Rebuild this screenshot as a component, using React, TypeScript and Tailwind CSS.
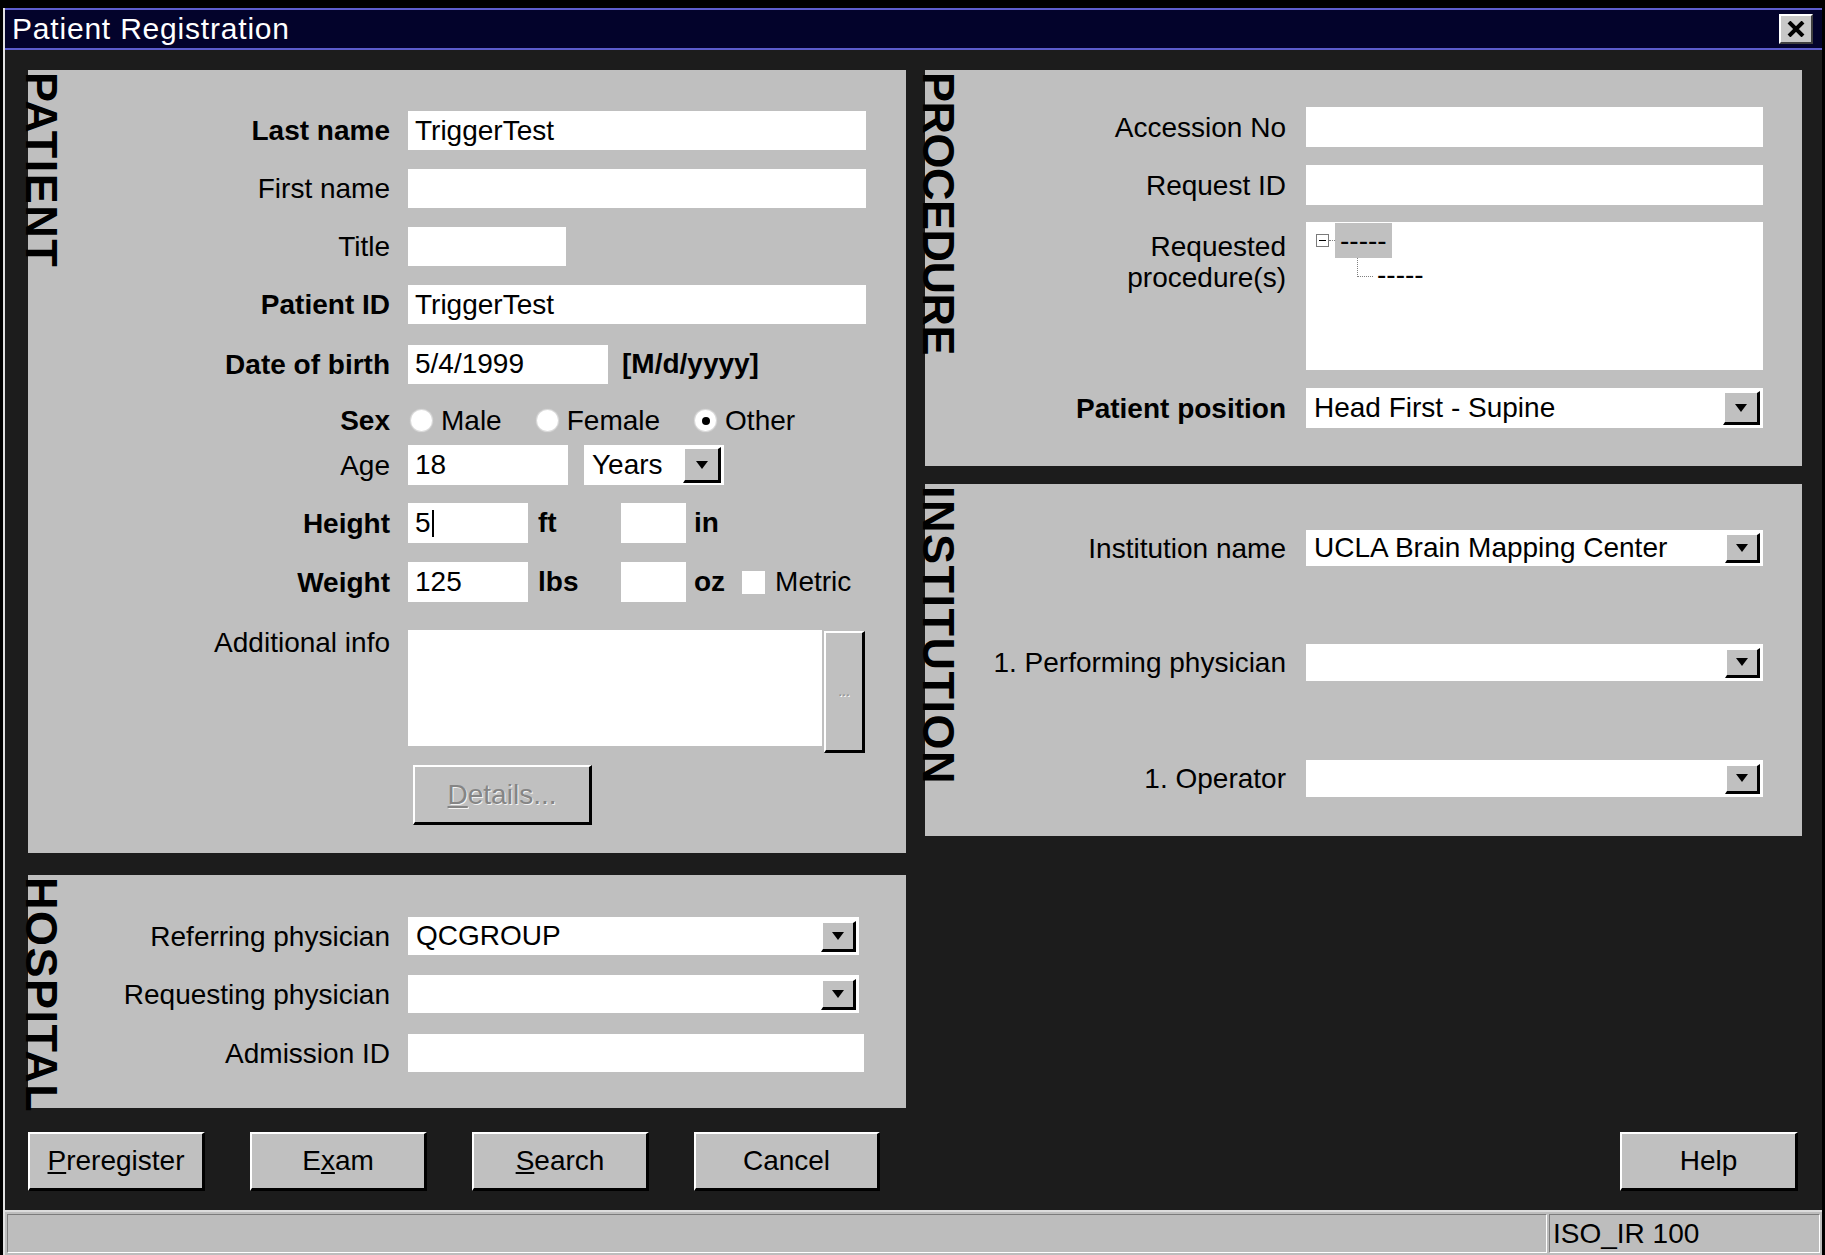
import React from 'react';

const raised =
  'border-t-2 border-l-2 border-r-[3px] border-b-[3px] border-t-white border-l-white border-r-black border-b-black';

const VTitle: React.FC<{ text: string; tight?: boolean }> = ({ text, tight }) => (
  <div className="w-[34px] shrink-0">
    <div
      className={`-ml-[9px] mt-[2px] [writing-mode:vertical-rl] text-[45px] font-bold leading-none text-black whitespace-nowrap ${
        tight ? 'tracking-[-0.5px]' : 'tracking-[1.5px]'
      }`}
    >
      {text}
    </div>
  </div>
);

const Panel: React.FC<{ title: string; tight?: boolean; className: string; children: React.ReactNode }> = ({
  title,
  tight,
  className,
  children,
}) => (
  <div className={`flex bg-[#bfbfbf] ${className}`}>
    <VTitle text={title} tight={tight} />
    <div className="flex-1 flex flex-col">{children}</div>
  </div>
);

const Row: React.FC<{
  label: React.ReactNode;
  bold?: boolean;
  wide?: boolean;
  className?: string;
  start?: boolean;
  children?: React.ReactNode;
}> = ({ label, bold, wide, className = '', start, children }) => (
  <div className={`flex ${start ? 'items-start' : 'items-center'} ${className}`}>
    <div className={`shrink-0 text-right leading-[31px] ${wide ? 'w-[327px]' : 'w-[328px]'} ${bold ? 'font-bold' : ''}`}>
      {label}
    </div>
    <div className={`flex items-center ${wide ? 'ml-[20px]' : 'ml-[18px]'}`}>{children}</div>
  </div>
);

const Box: React.FC<{ className: string; children?: React.ReactNode }> = ({ className, children }) => (
  <div className={`bg-white flex items-center pl-[7px] whitespace-nowrap ${className}`}>{children}</div>
);

const DropBtn: React.FC<{ className: string }> = ({ className }) => (
  <div className={`bg-[#c0c0c0] flex items-center justify-center shrink-0 ${raised} ${className}`}>
    <svg width="12" height="8" viewBox="0 0 12 8">
      <polygon points="0,0 12,0 6,8" fill="#000" />
    </svg>
  </div>
);

const Select: React.FC<{ className: string; value?: string; btn?: string }> = ({ className, value, btn = 'w-[35px] h-[31px]' }) => (
  <div className={`bg-white flex items-center justify-between pl-[8px] pr-[3px] ${className}`}>
    <span className="whitespace-nowrap">{value}</span>
    <DropBtn className={btn} />
  </div>
);

const Radio: React.FC<{ label: string; checked?: boolean }> = ({ label, checked }) => (
  <div className="flex items-center">
    <div className="w-[21px] h-[21px] rounded-full bg-white shadow-[0_0_1px_1px_#dedede] flex items-center justify-center">
      {checked && <div className="w-[8px] h-[8px] rounded-full bg-black" />}
    </div>
    <span className="ml-[9px]">{label}</span>
  </div>
);

const Button: React.FC<{ className: string; children: React.ReactNode }> = ({ className, children }) => (
  <div className={`bg-[#c0c0c0] flex items-center justify-center ${raised} ${className}`}>{children}</div>
);

export default function App() {
  return (
    <div className="w-[1825px] h-[1255px] bg-black pt-[8px] pl-[3px] pr-[3px] flex flex-col overflow-hidden text-[28px] text-black font-['Liberation_Sans',Arial,sans-serif]">
      <div className="flex-1 flex flex-col bg-[#1c1c1c] border-l-2 border-[#e2e2e2]">
        {/* title bar */}
        <div className="h-[42px] shrink-0 bg-[#03032b] border-t-2 border-b-2 border-[#5d5dcc] flex items-center justify-between pl-[7px] pr-[9px]">
          <span className="text-white text-[30px] leading-none tracking-[0.8px]">Patient Registration</span>
          <div className="w-[34px] h-[30px] bg-[#c8c8c8] border-t-2 border-l-2 border-white border-r-2 border-b-2 border-r-[#404040] border-b-[#404040] flex items-center justify-center">
            <svg width="18" height="16" viewBox="0 0 18 16">
              <path d="M2 1 L16 15 M16 1 L2 15" stroke="#000" strokeWidth="4" />
            </svg>
          </div>
        </div>

        {/* body */}
        <div className="flex-1 flex flex-col pl-[23px] pr-[20px] pt-[20px]">
          <div className="flex gap-[19px]">
            {/* left column */}
            <div className="w-[878px] flex flex-col gap-[22px]">
              <Panel title="PATIENT" className="h-[783px]">
                <div className="pt-[41px] flex flex-col">
                  <Row label="Last name" bold>
                    <Box className="w-[458px] h-[39px]">TriggerTest</Box>
                  </Row>
                  <Row label="First name" className="mt-[19px]">
                    <Box className="w-[458px] h-[39px]" />
                  </Row>
                  <Row label="Title" className="mt-[19px]">
                    <Box className="w-[158px] h-[39px]" />
                  </Row>
                  <Row label="Patient ID" bold className="mt-[19px]">
                    <Box className="w-[458px] h-[39px]">TriggerTest</Box>
                  </Row>
                  <Row label="Date of birth" bold className="mt-[19px]">
                    <Box className="w-[200px] h-[39px]">5/4/1999</Box>
                    <span className="ml-[14px] font-bold">[M/d/yyyy]</span>
                  </Row>
                  <Row label="Sex" bold className="mt-[16px] h-[39px]">
                    <div className="flex items-center gap-[35px] ml-[3px]">
                      <Radio label="Male" />
                      <Radio label="Female" />
                      <Radio label="Other" checked />
                    </div>
                  </Row>
                  <Row label="Age" className="mt-[5px]">
                    <Box className="w-[160px] h-[40px]">18</Box>
                    <Select className="w-[140px] h-[40px] ml-[16px]" value="Years" btn="w-[38px] h-[36px]" />
                  </Row>
                  <Row label="Height" bold className="mt-[17px]">
                    <Box className="w-[120px] h-[40px]">
                      5<span className="w-[2px] h-[27px] bg-black ml-[1px]" />
                    </Box>
                    <span className="w-[93px] pl-[10px] font-bold">ft</span>
                    <Box className="w-[65px] h-[40px]" />
                    <span className="pl-[8px] font-bold">in</span>
                  </Row>
                  <Row label="Weight" bold className="mt-[17px]">
                    <Box className="w-[120px] h-[40px]">125</Box>
                    <span className="w-[93px] pl-[10px] font-bold">lbs</span>
                    <Box className="w-[65px] h-[40px]" />
                    <span className="pl-[8px] font-bold">oz</span>
                    <div className="ml-[17px] w-[23px] h-[23px] bg-white" />
                    <span className="ml-[10px]">Metric</span>
                  </Row>
                  <Row label={<div className="-mt-[3px]">Additional info</div>} start className="mt-[27px]">
                    <div className="flex items-start">
                      <div className="w-[414px] h-[116px] bg-white" />
                      <div className={`ml-[2px] mt-[1px] w-[41px] h-[122px] bg-[#c0c0c0] flex items-center justify-center text-[14px] text-[#8a8a8a] [text-shadow:1px_1px_0_#fff] ${raised}`}>
                        ...
                      </div>
                    </div>
                  </Row>
                  <div className="mt-[12px] ml-[351px]">
                    <Button className="w-[179px] h-[60px]">
                      <span className="text-[#858585] [text-shadow:1px_1px_0_#f4f4f4]">
                        <span className="underline">D</span>etails...
                      </span>
                    </Button>
                  </div>
                </div>
              </Panel>

              <Panel title="HOSPITAL" className="h-[233px]">
                <div className="pt-[42px] flex flex-col">
                  <Row label="Referring physician">
                    <Select className="w-[451px] h-[38px]" value="QCGROUP" />
                  </Row>
                  <Row label="Requesting physician" className="mt-[20px]">
                    <Select className="w-[451px] h-[38px]" />
                  </Row>
                  <Row label="Admission ID" className="mt-[21px]">
                    <Box className="w-[456px] h-[38px]" />
                  </Row>
                </div>
              </Panel>
            </div>

            {/* right column */}
            <div className="w-[877px] flex flex-col gap-[18px]">
              <Panel title="PROCEDURE" tight className="h-[396px]">
                <div className="pt-[37px] flex flex-col">
                  <Row label="Accession No" wide>
                    <Box className="w-[457px] h-[40px]" />
                  </Row>
                  <Row label="Request ID" wide className="mt-[18px]">
                    <Box className="w-[457px] h-[40px]" />
                  </Row>
                  <Row
                    label={
                      <div className="pt-[9px]">
                        Requested
                        <br />
                        procedure(s)
                      </div>
                    }
                    wide
                    start
                    className="mt-[17px]"
                  >
                    <div className="w-[457px] h-[148px] bg-white flex flex-col pt-[1px]">
                      <div className="flex items-center ml-[10px]">
                        <div className="w-[13px] h-[13px] border border-[#7a7a7a] bg-white flex items-center justify-center">
                          <div className="w-[7px] h-[1px] bg-black" />
                        </div>
                        <div className="w-[6px] border-t border-dotted border-[#808080]" />
                        <div className="h-[35px] bg-[#c0c0c0] px-[5px] flex items-center leading-none">-----</div>
                      </div>
                      <div className="flex items-end ml-[51px]">
                        <div className="w-[16px] h-[19px] border-l border-b border-dotted border-[#808080]" />
                        <span className="ml-[4px] leading-[28px] -mb-[12px]">-----</span>
                      </div>
                    </div>
                  </Row>
                  <Row label="Patient position" bold wide className="mt-[18px]">
                    <Select className="w-[457px] h-[40px]" value="Head First - Supine" btn="w-[37px] h-[34px]" />
                  </Row>
                </div>
              </Panel>

              <Panel title="INSTITUTION" className="h-[352px]">
                <div className="pt-[46px] flex flex-col">
                  <Row label="Institution name" wide>
                    <Select className="w-[457px] h-[36px]" value="UCLA Brain Mapping Center" btn="w-[35px] h-[30px]" />
                  </Row>
                  <Row label="1. Performing physician" wide className="mt-[78px]">
                    <Select className="w-[457px] h-[37px]" btn="w-[35px] h-[30px]" />
                  </Row>
                  <Row label="1. Operator" wide className="mt-[79px]">
                    <Select className="w-[457px] h-[37px]" btn="w-[35px] h-[30px]" />
                  </Row>
                </div>
              </Panel>
            </div>
          </div>

          {/* buttons */}
          <div className="mt-[24px] h-[59px] flex items-stretch justify-between pr-[4px]">
            <div className="flex gap-[45px]">
              <Button className="w-[177px]">
                <span>
                  <span className="underline">P</span>reregister
                </span>
              </Button>
              <Button className="w-[177px]">
                <span>
                  E<span className="underline">x</span>am
                </span>
              </Button>
              <Button className="w-[177px]">
                <span>
                  <span className="underline">S</span>earch
                </span>
              </Button>
              <Button className="w-[186px]">Cancel</Button>
            </div>
            <Button className="w-[178px]">Help</Button>
          </div>
        </div>

        {/* status bar */}
        <div className="h-[45px] shrink-0 bg-[#bdbdbd] border-t-2 border-[#dcdcdc] flex p-[2px] gap-[2px]">
          <div className="flex-1 border border-t-[#7c7c7c] border-l-[#7c7c7c] border-b-white border-r-white" />
          <div className="w-[271px] border border-t-[#7c7c7c] border-l-[#7c7c7c] border-b-white border-r-white flex items-center pl-[3px] leading-none">
            ISO_IR 100
          </div>
        </div>
      </div>
    </div>
  );
}
